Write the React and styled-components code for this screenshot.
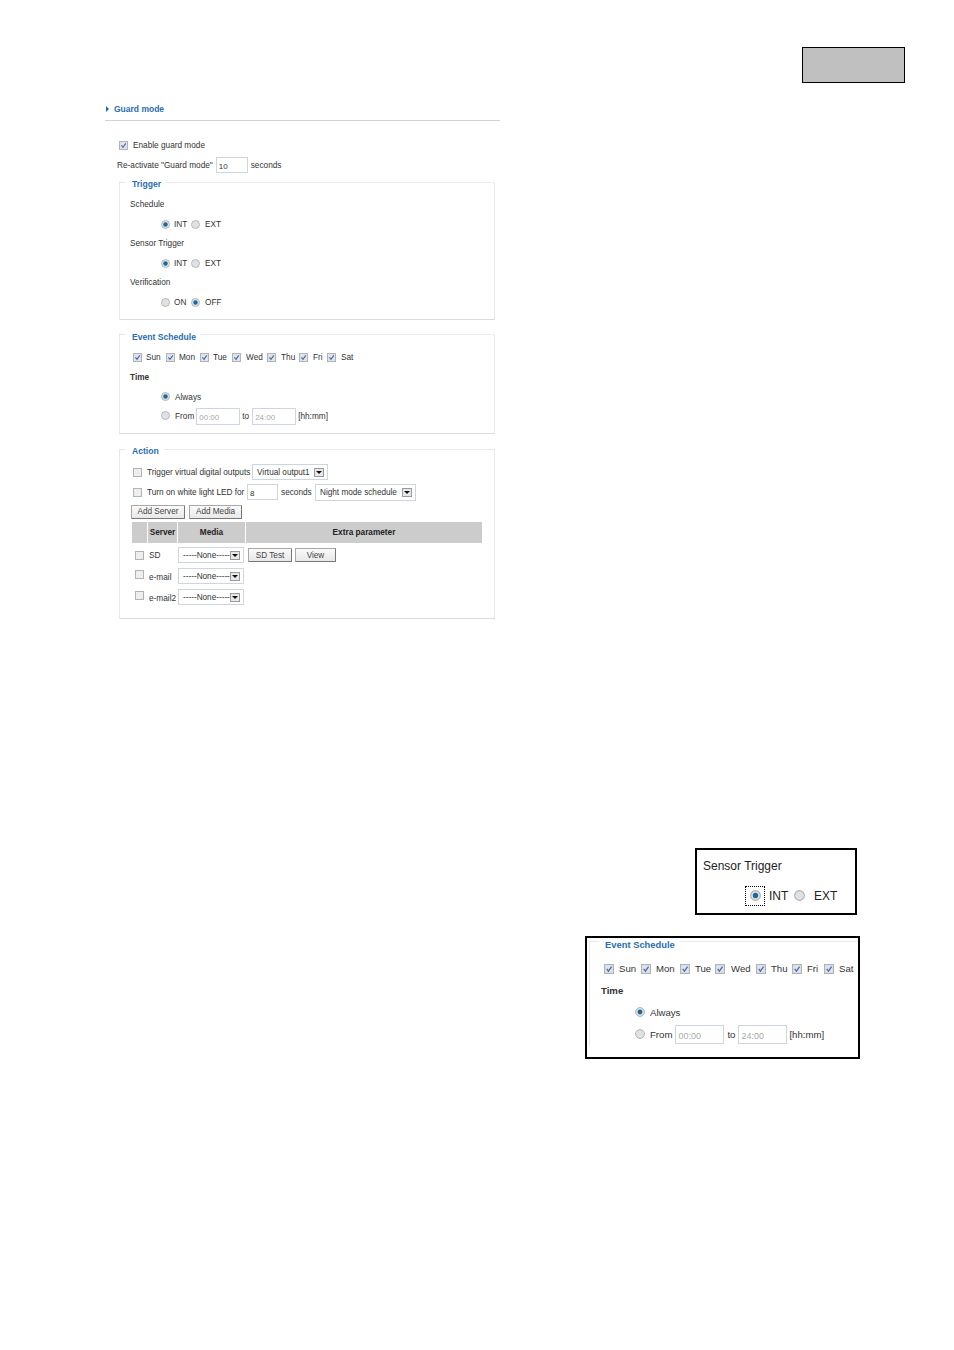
import React from "react";
import styled, { createGlobalStyle } from "styled-components";

const Global = createGlobalStyle`
  html, body { margin: 0; padding: 0; background: #fff; }
  body { font-family: "Liberation Sans", Arial, sans-serif; color: #333; }
`;

const Page = styled.div`
  width: 954px;
  height: 1350px;
  padding-top: 47px;
  box-sizing: border-box;
  overflow: hidden;
  display: flex;
  flex-direction: column;
`;

const GreyStamp = styled.div`
  align-self: flex-end;
  width: 103px;
  height: 36px;
  margin-right: 49px;
  box-sizing: border-box;
  background: #c0c0c0;
  border: 1px solid #000;
`;

const Panel = styled.section`
  width: 395px;
  margin: 20px 0 0 105px;
  font-size: 8.25px;
`;

const PanelTitle = styled.h2`
  margin: 0;
  height: 18px;
  box-sizing: border-box;
  border-bottom: 1px solid #cfd1d4;
  padding: 1px 0 0 1px;
  display: flex;
  align-items: flex-start;
  gap: 5px;
  font-size: 8.5px;
  line-height: 11px;
  font-weight: bold;
  color: #2a6db0;
  &::before {
    content: "";
    margin-top: 2px;
    border-left: 3px solid #1b6ab5;
    border-top: 3px solid transparent;
    border-bottom: 3px solid transparent;
  }
`;

const PanelBody = styled.div`
  padding: 14px 5px 0 14px;
`;

const Row = styled.div`
  display: flex;
  align-items: center;
  height: ${(p) => p.$h || 20}px;
  margin-left: ${(p) => p.$indent || 0}px;
  margin-top: ${(p) => p.$mt || 0}px;
  white-space: nowrap;
`;

const Text = styled.span`
  margin-left: ${(p) => p.$ml || 0}px;
  margin-top: ${(p) => (p.$dy || 0) * 2}px;
  width: ${(p) => (p.$w ? `${p.$w}px` : "auto")};
  flex: none;
  font-weight: ${(p) => (p.$bold ? "bold" : "normal")};
`;

const Fieldset = styled.fieldset`
  margin: ${(p) => p.$mt}px 0 0 0;
  padding: ${(p) => p.$pt}px 10px ${(p) => p.$pb}px 10px;
  border: 1px solid #e6eaee;
  border-bottom-color: #d6dce2;
  min-width: 0;
  box-sizing: border-box;
  width: 376px;
`;

const Legend = styled.legend`
  margin-left: -4px;
  padding: ${(p) => p.$pt}px 5px 0 6px;
  line-height: 10px;
  font-size: ${(p) => p.$size || 8.6}px;
  font-weight: bold;
  color: #2a6db0;
`;

const BoxSpan = styled.span`
  flex: none;
  display: inline-flex;
  width: ${(p) => p.$s}px;
  height: ${(p) => p.$s}px;
  margin-top: ${(p) => (p.$dy || 0) * 2}px;
`;

function Check({ on, s = 9, dy }) {
  return (
    <BoxSpan $s={s} $dy={dy}>
      <svg width={s} height={s} viewBox="0 0 9 9">
        <rect x="0.5" y="0.5" width="8" height="8" fill={on ? "#dfe3ea" : "#eeeeee"} stroke="#b0b4b8" />
        {on && <path d="M2.4 4.4 L4 6.4 L6.8 2.4" fill="none" stroke="#4a68a8" strokeWidth="1.1" />}
      </svg>
    </BoxSpan>
  );
}

function Radio({ on, s = 9, dy }) {
  return (
    <BoxSpan $s={s} $dy={dy}>
      <svg width={s} height={s} viewBox="0 0 9 9">
        <circle cx="4.5" cy="4.5" r="4" fill="#dfe1e3" stroke="#b0b2b4" strokeWidth="0.9" />
        {on && <circle cx="4.5" cy="4.5" r="2.2" fill="#1a6a9c" />}
      </svg>
    </BoxSpan>
  );
}

const Field = styled.span`
  flex: none;
  box-sizing: border-box;
  display: inline-flex;
  align-items: center;
  width: ${(p) => p.$w}px;
  height: ${(p) => p.$h || 16}px;
  margin-left: ${(p) => p.$ml || 0}px;
  padding: 2px 0 0 2px;
  border: 1px solid #cdd5e2;
  background: #fff;
  color: ${(p) => (p.$muted ? "#aaa" : "#333")};
  font-size: ${(p) => p.$size || 8}px;
`;

const SelectBox = styled.span`
  flex: none;
  box-sizing: border-box;
  display: inline-flex;
  align-items: center;
  justify-content: space-between;
  width: ${(p) => p.$w}px;
  height: ${(p) => p.$h || 16}px;
  padding: 1px 3px 0 4px;
  border: 1px solid #cdd5e2;
  background: #fff;
  font-size: 8.2px;
`;

const Arrow = styled.span`
  width: 10px;
  height: 9px;
  box-sizing: border-box;
  border: 1px solid #9a9a9a;
  background: #e8e8e8;
  display: flex;
  align-items: center;
  justify-content: center;
  &::after {
    content: "";
    border-top: 3px solid #111;
    border-left: 3px solid transparent;
    border-right: 3px solid transparent;
  }
`;

function Select({ w, h, children }) {
  return (
    <SelectBox $w={w} $h={h}>
      {children}
      <Arrow />
    </SelectBox>
  );
}

const Btn = styled.button`
  flex: none;
  box-sizing: border-box;
  width: ${(p) => p.$w}px;
  height: 14px;
  margin: 0;
  padding: 0;
  font: 8.2px "Liberation Sans", Arial, sans-serif;
  color: #444;
  background: linear-gradient(#fafafa, #e8e8e8);
  border: 1px solid #a8a8a8;
  border-right-color: #777;
  border-bottom-color: #777;
  border-radius: 1px;
`;

const BtnGroup = styled.div`
  display: flex;
  gap: ${(p) => p.$gap}px;
`;

const Grid = styled.div`
  display: grid;
  grid-template-columns: 16px 30px 68px 237px;
  height: ${(p) => p.$h}px;
  margin: ${(p) => p.$mt || 0}px 0 ${(p) => p.$mb || 0}px 2px;
`;

const Head = styled.div`
  background: #cccccc;
  border-right: 1px solid #fff;
  display: flex;
  align-items: center;
  justify-content: center;
  font-weight: bold;
  color: #222;
  overflow: hidden;
`;

const Cell = styled.div`
  display: flex;
  align-items: center;
  padding-left: ${(p) => p.$pl || 0}px;
  white-space: nowrap;
`;

const HighlightBox = styled.div`
  box-sizing: border-box;
  border: 2px solid #000;
  background: #fff;
`;

const SensorBox = styled(HighlightBox)`
  width: 162px;
  height: 67px;
  margin: 0 0 0 695px;
  padding: 9px 0 0 6px;
  font-size: 12px;
  color: #222;
`;

const SensorTitle = styled.div`
  line-height: 14px;
`;

const FocusRing = styled.span`
  flex: none;
  box-sizing: border-box;
  width: 20px;
  height: 20px;
  margin-left: 42px;
  border: 1px dotted #000;
  display: flex;
  align-items: center;
  justify-content: center;
`;

const EventBox = styled(HighlightBox)`
  width: 275px;
  height: 123px;
  margin: 21px 0 0 585px;
  padding: 0 0 0 2px;
  overflow: hidden;
  font-size: 9.6px;
`;

const BigFieldset = styled.fieldset`
  margin: -4px 0 0 0;
  padding: 0 0 0 14px;
  border: 0;
  border-top: 1px solid #e6eaee;
  border-left: 1px solid #e6eaee;
  min-width: 0;
`;

const BigLegend = styled(Legend)`
  margin-left: -5px;
`;

const LowerArea = styled.div`
  margin-top: 229px;
  display: flex;
  flex-direction: column;
`;

const days = [
  ["Sun", 33, 4],
  ["Mon", 34, 4],
  ["Tue", 32, 4],
  ["Wed", 35, 5],
  ["Thu", 32, 5],
  ["Fri", 28, 5],
  ["Sat", 28, 5],
];

const bigDays = [
  ["Sun", 37, 5],
  ["Mon", 39, 5],
  ["Tue", 35, 5],
  ["Wed", 41, 6],
  ["Thu", 36, 5],
  ["Fri", 32, 5],
  ["Sat", 30, 5],
];

const DayItem = styled.span`
  flex: none;
  display: inline-flex;
  align-items: center;
  width: ${(p) => p.$w}px;
`;

function Days({ list, s }) {
  return list.map(([name, w, g]) => (
    <DayItem key={name} $w={w}>
      <Check on s={s} />
      <Text $ml={g}>{name}</Text>
    </DayItem>
  ));
}

function Choice({ a, b, first }) {
  return (
    <Row $h={19.5} $indent={31}>
      <Radio on={first} />
      <Text $ml={4} $w={17}>{a}</Text>
      <Radio on={!first} />
      <Text $ml={5}>{b}</Text>
    </Row>
  );
}

export default function App() {
  return (
    <Page>
      <Global />
      <GreyStamp />
      <Panel>
        <PanelTitle>Guard mode</PanelTitle>
        <PanelBody>
          <Row>
            <Check on />
            <Text $ml={5}>Enable guard mode</Text>
          </Row>
          <Row $indent={-2}>
            <Text>Re-activate "Guard mode"</Text>
            <Field $w={32} $ml={3}>10</Field>
            <Text $ml={3}>seconds</Text>
          </Row>

          <Fieldset $mt={1} $pt={6} $pb={6.5}>
            <Legend $pt={3}>Trigger</Legend>
            <Row $h={19.5}><Text>Schedule</Text></Row>
            <Choice a="INT" b="EXT" first />
            <Row $h={19.5}><Text>Sensor Trigger</Text></Row>
            <Choice a="INT" b="EXT" first />
            <Row $h={19.5}><Text>Verification</Text></Row>
            <Choice a="ON" b="OFF" />
          </Fieldset>

          <Fieldset $mt={7} $pt={6} $pb={6}>
            <Legend $pt={5}>Event Schedule</Legend>
            <Row $indent={3}><Days list={days} s={9} /></Row>
            <Row><Text $bold>Time</Text></Row>
            <Row $h={19.5} $indent={31}>
              <Radio on dy={-1} /><Text $ml={5}>Always</Text>
            </Row>
            <Row $h={19.5} $indent={31}>
              <Radio dy={-1} /><Text $ml={5}>From</Text>
              <Field $w={44} $h={17} $ml={2} $muted>00:00</Field>
              <Text $ml={2}>to</Text>
              <Field $w={44} $h={17} $ml={3} $muted>24:00</Field>
              <Text $ml={2}>[hh:mm]</Text>
            </Row>
          </Fieldset>

          <Fieldset $mt={9} $pt={6.5} $pb={10}>
            <Legend $pt={3}>Action</Legend>
            <Row $indent={3}>
              <Check />
              <Text $ml={5} $w={105}>Trigger virtual digital outputs</Text>
              <Select w={76}>Virtual output1</Select>
            </Row>
            <Row $indent={3}>
              <Check />
              <Text $ml={5} $w={100}>Turn on white light LED for</Text>
              <Field $w={31}>8</Field>
              <Text $ml={3} $w={34}>seconds</Text>
              <Select w={101} h={17}>Night mode schedule</Select>
            </Row>
            <Row $h={14} $indent={1} $mt={2.5}>
              <BtnGroup $gap={4}>
                <Btn $w={54}>Add Server</Btn>
                <Btn $w={53}>Add Media</Btn>
              </BtnGroup>
            </Row>
            <Grid $h={21} $mt={3} $mb={2}>
              <Head />
              <Head>Server</Head>
              <Head>Media</Head>
              <Head>Extra parameter</Head>
            </Grid>
            <Grid $h={21}>
              <Cell $pl={3}><Check /></Cell>
              <Cell $pl={1}>SD</Cell>
              <Cell><Select w={66}>-----None-----</Select></Cell>
              <Cell $pl={2}>
                <BtnGroup $gap={3}>
                  <Btn $w={44}>SD Test</Btn>
                  <Btn $w={41}>View</Btn>
                </BtnGroup>
              </Cell>
            </Grid>
            <Grid $h={21}>
              <Cell $pl={3}><Check dy={-2} /></Cell>
              <Cell $pl={1}><Text $dy={1}>e-mail</Text></Cell>
              <Cell><Select w={66}>-----None-----</Select></Cell>
            </Grid>
            <Grid $h={21}>
              <Cell $pl={3}><Check dy={-2} /></Cell>
              <Cell $pl={1}><Text $dy={1}>e-mail2</Text></Cell>
              <Cell><Select w={66}>-----None-----</Select></Cell>
            </Grid>
          </Fieldset>
        </PanelBody>
      </Panel>

      <LowerArea>
        <SensorBox>
          <SensorTitle>Sensor Trigger</SensorTitle>
          <Row $h={20} $mt={13}>
            <FocusRing><Radio on s={11} /></FocusRing>
            <Text $ml={4} $w={25}>INT</Text>
            <Radio s={11} />
            <Text $ml={9}>EXT</Text>
          </Row>
        </SensorBox>
        <EventBox>
          <BigFieldset>
            <BigLegend $size={9.4} $pt={6}>Event Schedule</BigLegend>
            <Row $h={22} $mt={8}><Days list={bigDays} s={10} /></Row>
            <Row $h={22} $indent={-3}><Text $bold>Time</Text></Row>
            <Row $h={22} $indent={31}>
              <Radio on s={10} dy={-1} /><Text $ml={5}>Always</Text>
            </Row>
            <Row $h={22.5} $indent={31}>
              <Radio s={10} dy={-1} /><Text $ml={5}>From</Text>
              <Field $w={49} $h={19} $ml={3} $size={9} $muted>00:00</Field>
              <Text $ml={3}>to</Text>
              <Field $w={49} $h={19} $ml={3} $size={9} $muted>24:00</Field>
              <Text $ml={2}>[hh:mm]</Text>
            </Row>
          </BigFieldset>
        </EventBox>
      </LowerArea>
    </Page>
  );
}
